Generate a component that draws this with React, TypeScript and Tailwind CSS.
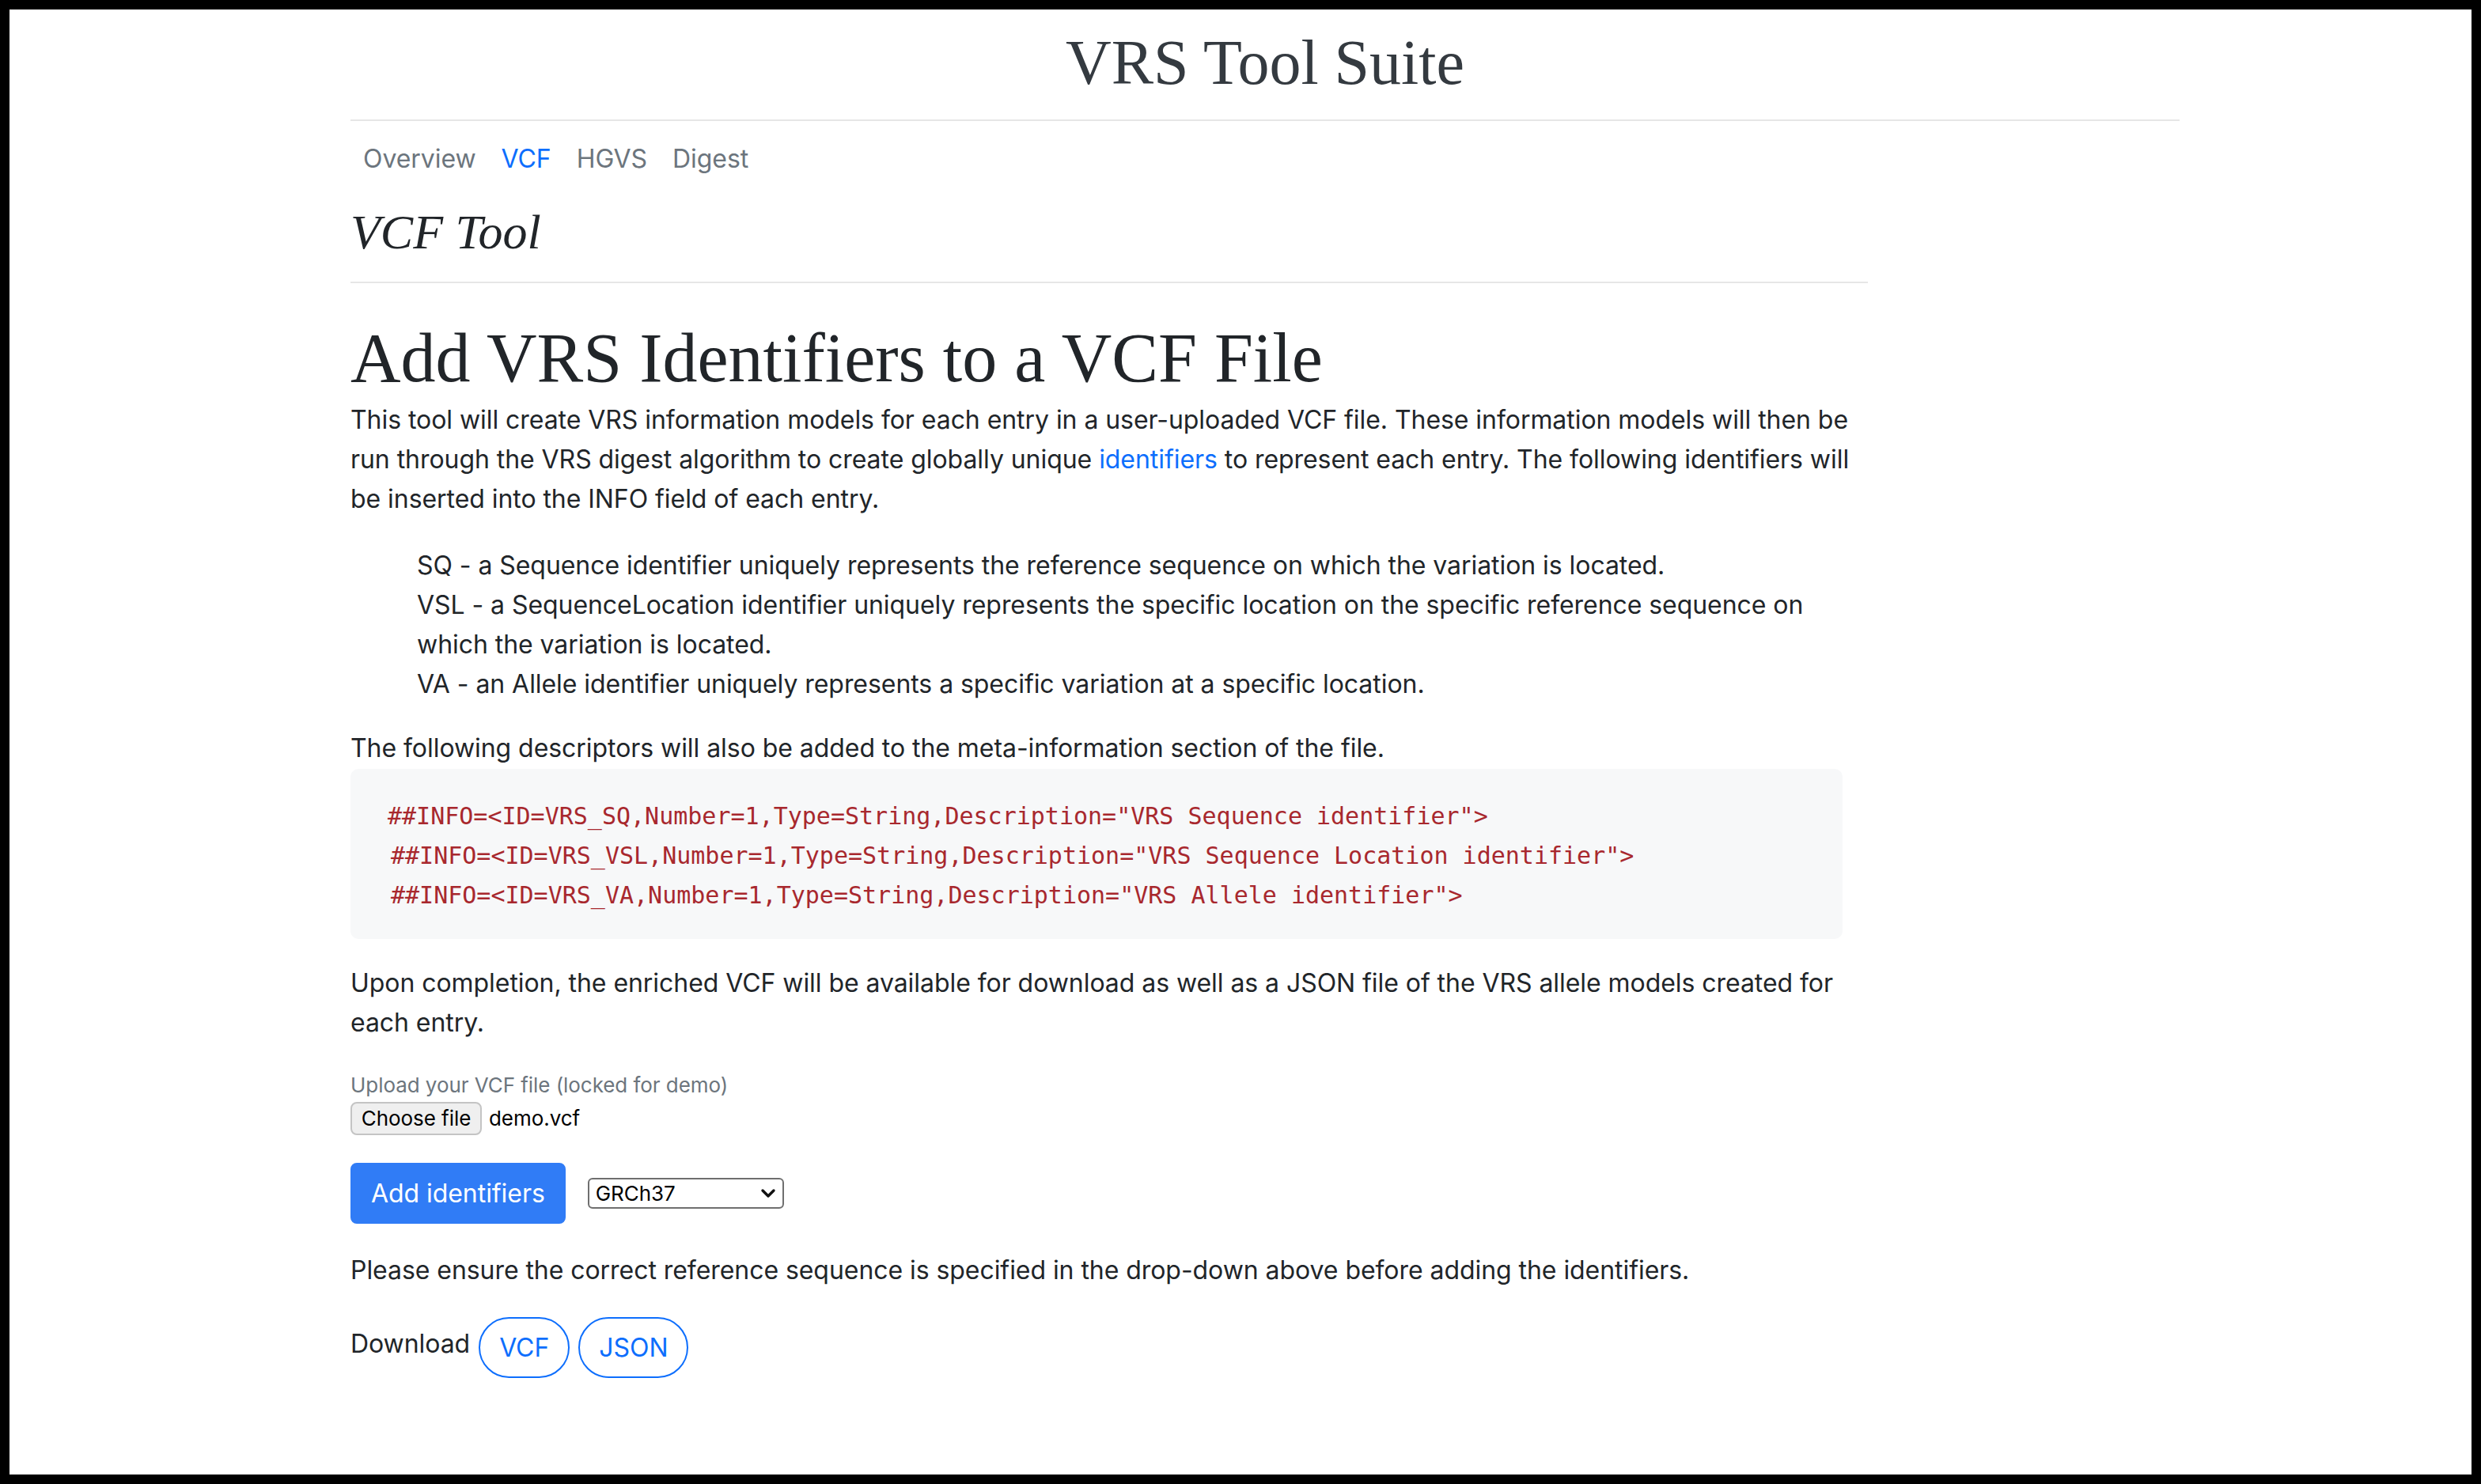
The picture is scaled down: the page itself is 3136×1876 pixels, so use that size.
const tabs = [
  { label: "Overview", active: false },
  { label: "VCF", active: true },
  { label: "HGVS", active: false },
  { label: "Digest", active: false },
];

const infoLines = [
  '##INFO=<ID=VRS_SQ,Number=1,Type=String,Description="VRS Sequence identifier">',
  '##INFO=<ID=VRS_VSL,Number=1,Type=String,Description="VRS Sequence Location identifier">',
  '##INFO=<ID=VRS_VA,Number=1,Type=String,Description="VRS Allele identifier">',
];

function ChevronDown() {
  return (
    <svg width="20" height="14" viewBox="0 0 20 14" fill="none">
      <path d="M3 3 L10 10 L17 3" stroke="#111" strokeWidth="3.4" strokeLinecap="round" strokeLinejoin="round" />
    </svg>
  );
}

export default function App() {
  return (
    <div className="min-h-screen bg-black p-[12px]">
      <div className="h-[1852px] bg-white font-['Inter',sans-serif] tracking-[-0.0035em] text-[#212529]">
        <div className="ml-[431px] w-[2312px]">
          <header className="border-b-2 border-[#e6e6e6] pt-[19px] pb-[24px] text-center">
            <h1 className="font-['Liberation_Serif',serif] text-[80px] leading-[96px] tracking-normal text-[#343a40]">
              VRS Tool Suite
            </h1>
          </header>

          <nav className="mt-[8px] flex text-[32px] leading-[48px]">
            {tabs.map((tab) => (
              <a
                key={tab.label}
                href="#"
                className={
                  tab.active
                    ? "px-[16px] py-[16px] text-[#0d6efd]"
                    : "px-[16px] py-[16px] text-[#6c757d]"
                }
              >
                {tab.label}
              </a>
            ))}
          </nav>

          <div className="w-[1918px]">
            <div className="mt-[16px] border-b-2 border-[#e6e6e6] pb-[27px]">
              <h2 className="font-['Liberation_Serif',serif] text-[62px] italic leading-[72px] tracking-normal">VCF Tool</h2>
            </div>

            <h1 className="mt-[42px] font-['Liberation_Serif',serif] text-[88px] leading-[106px] tracking-normal">
              Add VRS Identifiers to a VCF File
            </h1>

            <div className="text-[32px] leading-[50px]">
              <p>
                This tool will create VRS information models for each entry in a user-uploaded VCF file. These
                information models will then be run through the VRS digest algorithm to create globally unique{" "}
                <a href="#" className="text-[#0d6efd]">
                  identifiers
                </a>{" "}
                to represent each entry. The following identifiers will be inserted into the INFO field of each
                entry.
              </p>

              <ul className="mt-[34px] list-none pl-[84px]">
                <li>SQ - a Sequence identifier uniquely represents the reference sequence on which the variation is located.</li>
                <li>
                  VSL - a SequenceLocation identifier uniquely represents the specific location on the specific
                  reference sequence on which the variation is located.
                </li>
                <li>VA - an Allele identifier uniquely represents a specific variation at a specific location.</li>
              </ul>

              <p className="mt-[31px]">The following descriptors will also be added to the meta-information section of the file.</p>

              <pre className="mt-[1px] mr-[32px] rounded-[10px] bg-[#f7f8f9] pt-[35px] pb-[30px] pl-[47px] font-['DejaVu_Sans_Mono',monospace] text-[30px] leading-[50px] tracking-normal text-[#a8282e]">
                {infoLines.map((line, i) => (
                  <div key={line} className={i === 0 ? "" : "ml-[4px]"}>
                    {line}
                  </div>
                ))}
              </pre>

              <p className="mt-[31px]">
                Upon completion, the enriched VCF will be available for download as well as a JSON file of the VRS
                allele models created for each entry.
              </p>

              <div className="mt-[33px] text-[26px] leading-[42px] text-[#6c757d]">Upload your VCF file (locked for demo)</div>
              <div className="flex items-center gap-[9px] text-[26px] leading-[42px]">
                <span className="flex h-[42px] w-[166px] items-center justify-center rounded-[8px] border-2 border-[#c4c4c4] bg-[#efefef] text-black">
                  Choose file
                </span>
                <span className="text-black">demo.vcf</span>
              </div>

              <div className="mt-[35px] flex items-center gap-[28px]">
                <button className="h-[77px] rounded-[8px] border-2 border-[#307cf6] bg-[#307cf6] px-[24px] text-[32px] text-white">
                  Add identifiers
                </button>
                <div className="flex h-[39px] w-[248px] items-center justify-between rounded-[6px] border-2 border-[#6f6f6f] pl-[8px] pr-[8px] text-[26px] leading-[34px] text-black">
                  <span>GRCh37</span>
                  <ChevronDown />
                </div>
              </div>

              <p className="mt-[34px]">
                Please ensure the correct reference sequence is specified in the drop-down above before adding the
                identifiers.
              </p>

              <div className="mt-[34px] flex items-start gap-[11px]">
                <span className="mt-[9px]">Download</span>
                <a href="#" className="flex h-[77px] items-center rounded-full border-2 border-[#0d6efd] px-[24px] text-[#0d6efd]">
                  VCF
                </a>
                <a href="#" className="flex h-[77px] items-center rounded-full border-2 border-[#0d6efd] px-[24px] text-[#0d6efd]">
                  JSON
                </a>
              </div>
            </div>
          </div>
        </div>
      </div>
    </div>
  );
}
